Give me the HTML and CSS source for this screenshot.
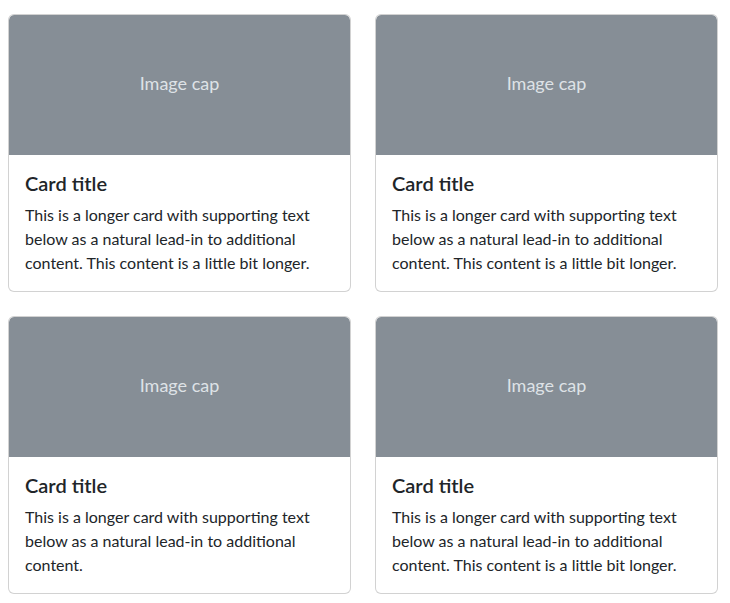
FILE: index.html
```html
<!DOCTYPE html>
<html lang="en">
<head>
<meta charset="utf-8">
<title>Cards</title>
<link rel="stylesheet" href="styles.css">
</head>
<body>
<div class="grid">
  <div class="card">
    <div class="card-img"><span>Image cap</span></div>
    <div class="card-body">
      <h5 class="card-title">Card title</h5>
      <p class="card-text">This is a longer card with supporting text below as a natural lead-in to additional content. This content is a little bit longer.</p>
    </div>
  </div>
  <div class="card">
    <div class="card-img"><span>Image cap</span></div>
    <div class="card-body">
      <h5 class="card-title">Card title</h5>
      <p class="card-text">This is a longer card with supporting text below as a natural lead-in to additional content. This content is a little bit longer.</p>
    </div>
  </div>
  <div class="card">
    <div class="card-img"><span>Image cap</span></div>
    <div class="card-body">
      <h5 class="card-title">Card title</h5>
      <p class="card-text">This is a longer card with supporting text below as a natural lead-in to additional content.</p>
    </div>
  </div>
  <div class="card">
    <div class="card-img"><span>Image cap</span></div>
    <div class="card-body">
      <h5 class="card-title">Card title</h5>
      <p class="card-text">This is a longer card with supporting text below as a natural lead-in to additional content. This content is a little bit longer.</p>
    </div>
  </div>
</div>
</body>
</html>
```

FILE: styles.css
```css
* { box-sizing: border-box; }
html, body { margin: 0; background: #fff; }
body {
  font-family: "Segoe UI", Lato, "Liberation Sans", sans-serif;
  font-size: 16px;
  line-height: 1.5;
  color: #212529;
}
.grid {
  display: grid;
  grid-template-columns: 343px 343px;
  column-gap: 24px;
  row-gap: 24px;
  padding: 14px 0 0 8px;
}
.card {
  display: flex;
  flex-direction: column;
  border: 1px solid rgba(0, 0, 0, 0.175);
  border-radius: 6px;
  background: #fff;
  overflow: hidden;
}
.card-img {
  height: 140px;
  background: #868e96;
  color: #dee2e6;
  font-size: 18px;
  line-height: 1.2;
  display: flex;
  align-items: center;
  justify-content: center;
  padding-bottom: 2px;
  border-radius: 5px 5px 0 0;
}
.card-body {
  padding: 16px;
  flex: 1;
}
.card-title {
  margin: 0 0 8px;
  font-size: 20px;
  font-weight: 600;
  line-height: 1.2;
}
.card-text {
  margin: 0;
}
```
